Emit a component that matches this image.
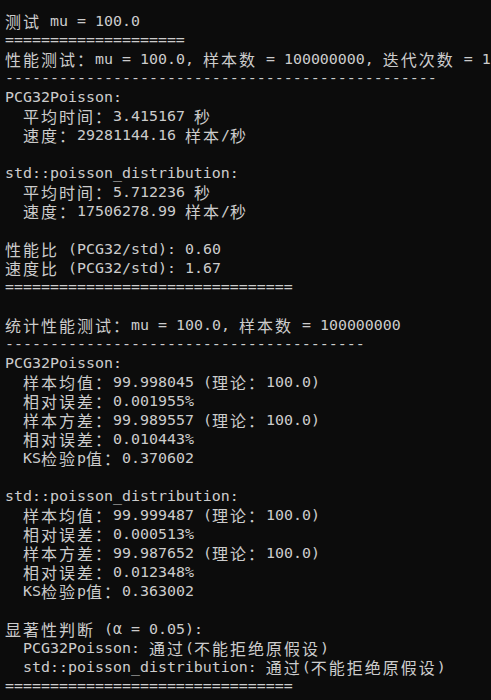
import React from 'react';

const lines: string[] = [
  '测试 mu = 100.0',
  '='.repeat(20),
  '性能测试：mu = 100.0, 样本数 = 100000000, 迭代次数 = 10',
  '-'.repeat(48),
  'PCG32Poisson:',
  '  平均时间：3.415167 秒',
  '  速度：29281144.16 样本/秒',
  '',
  'std::poisson_distribution:',
  '  平均时间：5.712236 秒',
  '  速度：17506278.99 样本/秒',
  '',
  '性能比 (PCG32/std): 0.60',
  '速度比 (PCG32/std): 1.67',
  '='.repeat(32),
  '',
  '统计性能测试：mu = 100.0, 样本数 = 100000000',
  '-'.repeat(40),
  'PCG32Poisson:',
  '  样本均值：99.998045 (理论：100.0)',
  '  相对误差：0.001955%',
  '  样本方差：99.989557 (理论：100.0)',
  '  相对误差：0.010443%',
  '  KS检验p值：0.370602',
  '',
  'std::poisson_distribution:',
  '  样本均值：99.999487 (理论：100.0)',
  '  相对误差：0.000513%',
  '  样本方差：99.987652 (理论：100.0)',
  '  相对误差：0.012348%',
  '  KS检验p值：0.363002',
  '',
  '显著性判断 (α = 0.05):',
  '  PCG32Poisson: 通过(不能拒绝原假设)',
  '  std::poisson_distribution: 通过(不能拒绝原假设)',
  '='.repeat(32),
];

const wide = /[\u2E80-\u9FFF\u3000-\u303F\uFF00-\uFF60]/;

// wide chars take two terminal cells (18px)
const Line = ({ text }: { text: string }) => {
  const parts: React.ReactNode[] = [];
  let buf = '';
  Array.from(text).forEach((ch, i) => {
    if (wide.test(ch)) {
      if (buf) {
        parts.push(buf);
        buf = '';
      }
      parts.push(
        <span
          key={i}
          className="inline-block w-[18px] font-['Noto_Sans_CJK_SC',sans-serif] text-[16px] leading-[19px] align-top"
        >
          {ch}
        </span>
      );
    } else {
      buf += ch;
    }
  });
  if (buf) parts.push(buf);
  return <div className="h-[19px] whitespace-pre">{parts.length ? parts : ' '}</div>;
};

export default function App() {
  return (
    <div className="h-screen w-full overflow-hidden bg-[#0c0c0c] pt-[12px] pl-[5px] font-['DejaVu_Sans_Mono',monospace] text-[14.95px] leading-[19px] text-[#cccccc]">
      {lines.map((l, i) => (
        <Line key={i} text={l} />
      ))}
    </div>
  );
}
